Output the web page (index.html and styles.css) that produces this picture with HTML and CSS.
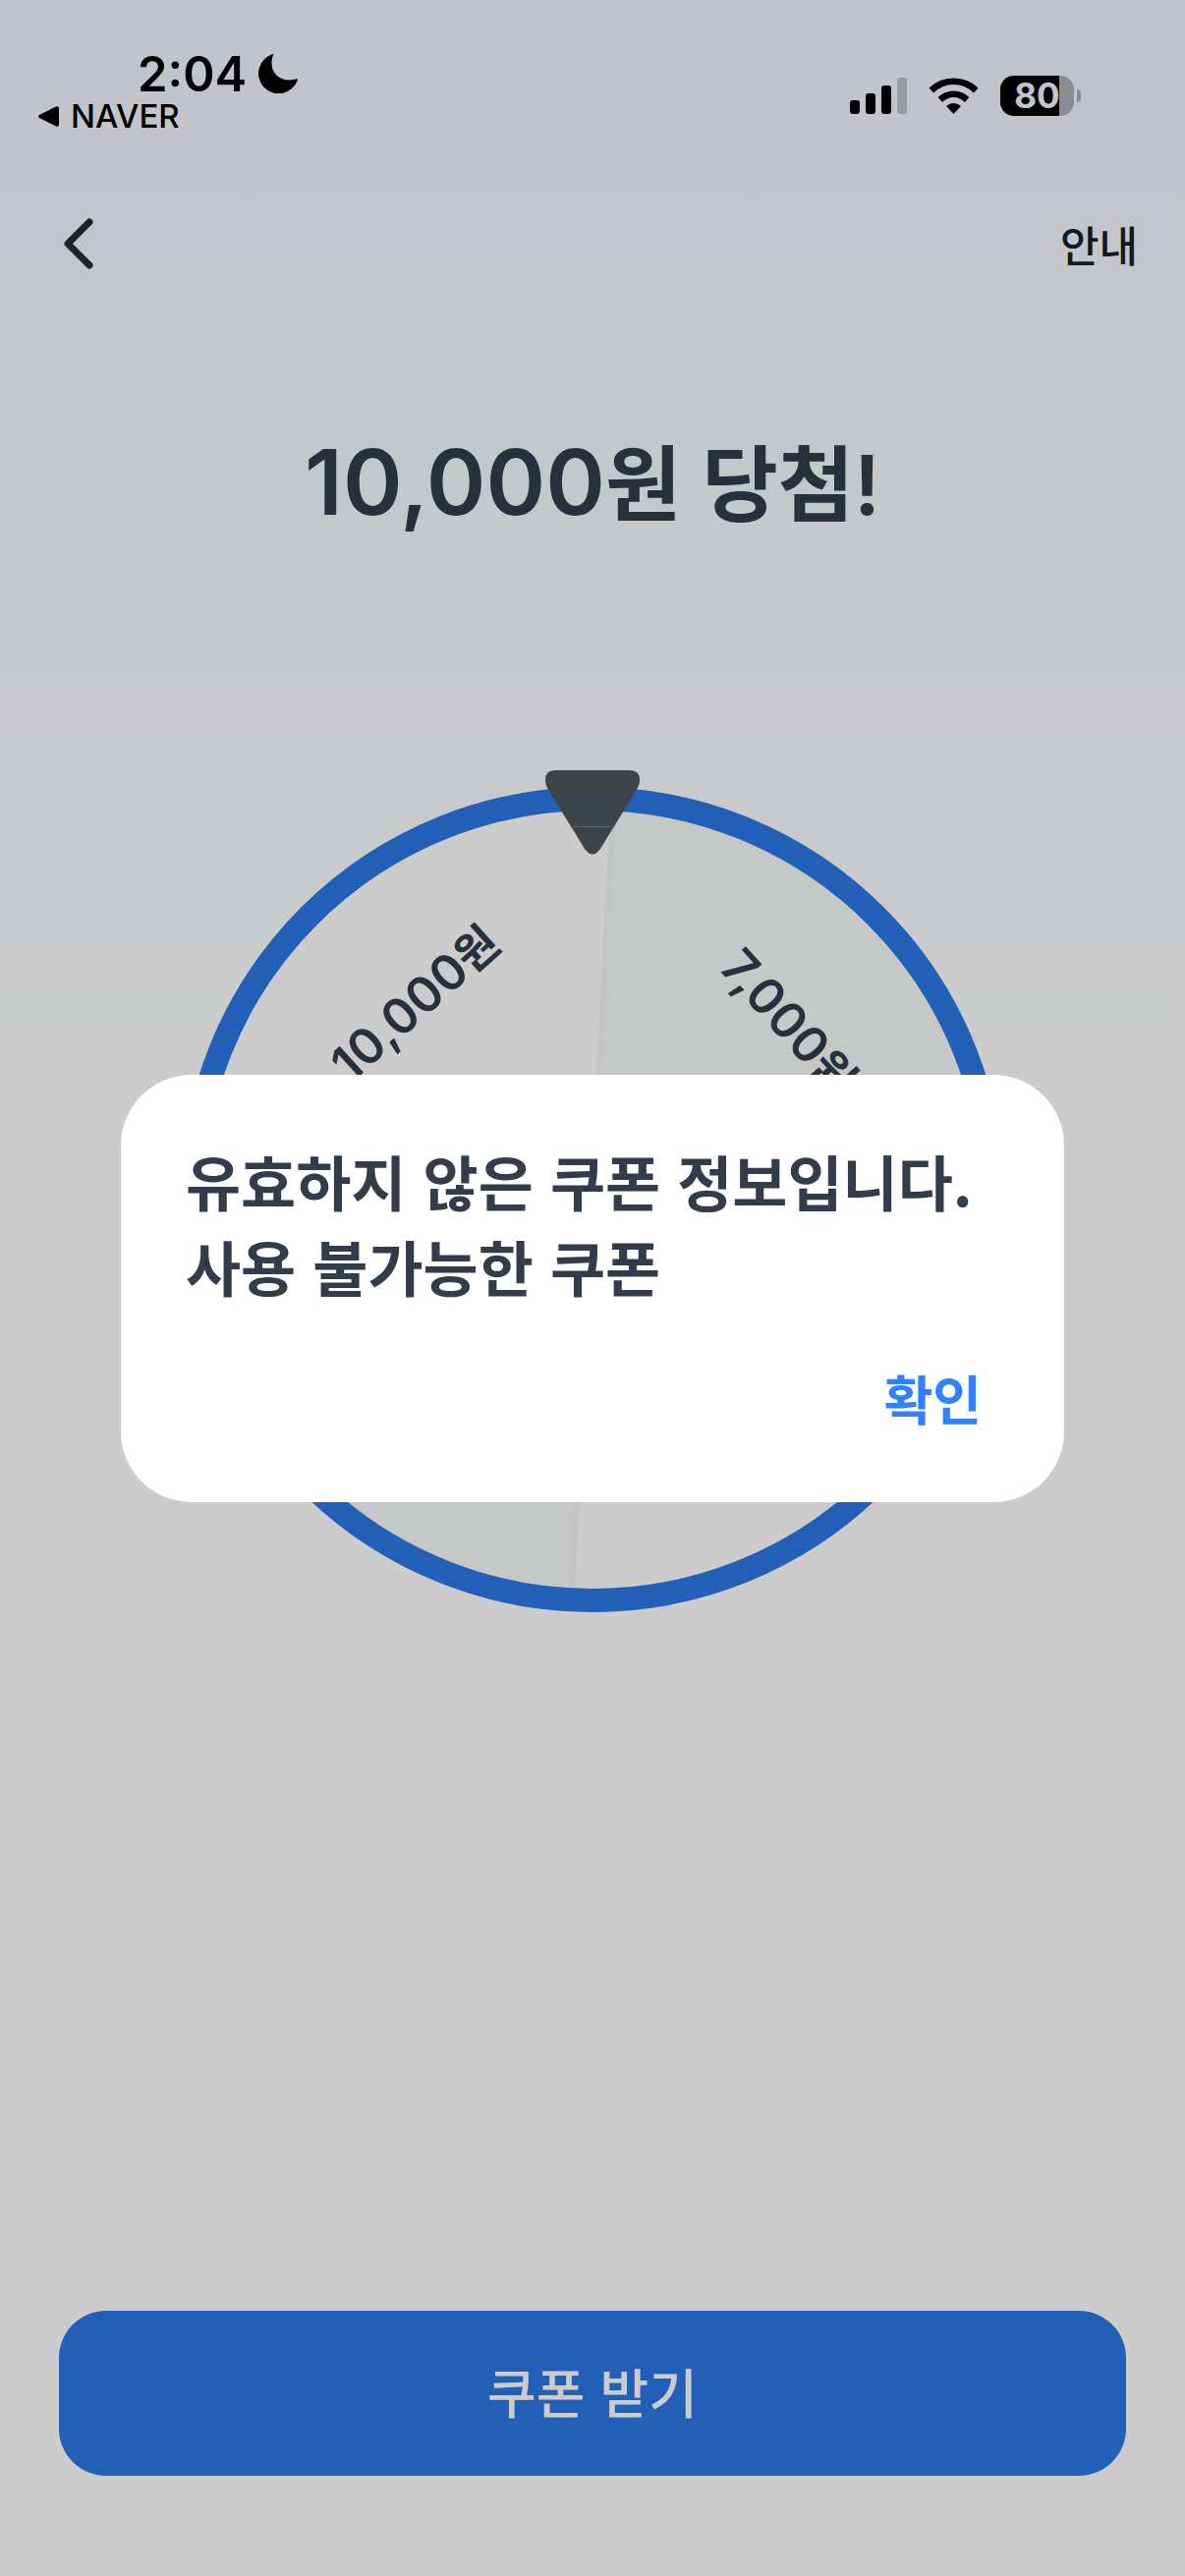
FILE: index.html
```html
<!DOCTYPE html>
<html lang="ko">
<head>
  <meta charset="UTF-8">
  <meta name="viewport" content="width=device-width, initial-scale=1">
  <title>쿠폰 룰렛</title>
  <link rel="stylesheet" href="styles.css">
</head>
<body>

  <div class="page">
    <div class="status-bar">
      <div class="status-left">
        <div class="clock">
          <span>2:04</span>
          <svg class="moon" viewBox="0 0 40 40">
            <path d="M15 1C16 0 15 -0.500 13.500 0.500A20.500 20.500 0 1 0 39.500 27.500C40.500 25.500 39.500 25 38 25.500C22 30 9 18 15 1Z"/>
          </svg>
        </div>
        <a class="back-app" href="#">
          <svg class="back-arrow" viewBox="0 0 21 21">
            <path d="M1 9Q-1 10.500 1 12L18 20.500Q21 21.500 21 18.500V2.500Q21 -0.500 18 0.500Z"/>
          </svg>
          <span>NAVER</span>
        </a>
      </div>
      <div class="status-right">
        <svg class="signal" viewBox="0 0 58 37">
          <rect x="0" y="23" width="10" height="14" rx="3"/>
          <rect x="16" y="16" width="10" height="21" rx="3"/>
          <rect x="32" y="8" width="10" height="29" rx="3"/>
          <rect x="48" y="0" width="10" height="37" rx="3" fill="#c1c4c9"/>
        </svg>
        <svg class="wifi" viewBox="0 0 51 37">
          <path d="M0.500 10.500A36 36 0 0 1 50.500 10.500L46 15.500A29 29 0 0 0 5 15.500Z"/>
          <path d="M9.500 20A23 23 0 0 1 41.500 20L37 25A16 16 0 0 0 14 25Z"/>
          <path d="M18 29A11 11 0 0 1 33 29L25.500 37Z"/>
        </svg>
        <div class="battery"><span>80</span></div>
      </div>
    </div>

    <header class="top-bar">
      <button class="back" type="button" aria-label="뒤로">
        <svg viewBox="0 0 30 52">
          <path d="M26 4L4 26L26 48"/>
        </svg>
      </button>
      <a class="guide" href="#">안내</a>
    </header>

    <main>
      <h1>10,000<span class="unit">원 당첨!</span></h1>

      <svg class="wheel" viewBox="-420 -437 840 857">
        <circle r="408" fill="#ffffff"/>
        <g transform="rotate(3)">
          <path d="M0 0V-408A408 408 0 0 1 408 0Z" fill="#f8faf9"/>
          <path d="M0 0V408A408 408 0 0 1 -408 0Z" fill="#f8faf9"/>
          <path d="M0 -408V408M-408 0H408" stroke="#f4f5f8" stroke-width="6"/>
        </g>
        <circle r="408" fill="none" stroke="#2b78e5" stroke-width="24"/>
        <g class="prize">
          <text transform="rotate(-42)" y="-252">10,000<tspan class="won">원</tspan></text>
          <text transform="rotate(48)" y="-252">7,000<tspan class="won">원</tspan></text>
        </g>
        <path class="pointer" d="M-38 -437H38Q48 -437 48 -427Q48 -423 46 -419L8 -357Q0 -346 -8 -357L-46 -419Q-48 -423 -48 -427Q-48 -437 -38 -437Z"/>
        <path d="M-36 -408.500H36" stroke="#415a85"/>
        <path d="M-20 -379.500H20" stroke="#7a7f86"/>
      </svg>
    </main>

    <footer>
      <button class="get-coupon" type="button">쿠폰 받기</button>
    </footer>
  </div>

  <div class="overlay">
    <div class="dialog" role="alertdialog" aria-labelledby="message">
      <p id="message">유효하지 않은 쿠폰 정보입니다.<br>사용 불가능한 쿠폰</p>
      <button class="confirm" type="button">확인</button>
    </div>
  </div>

</body>
</html>
```
FILE: styles.css
```css
* {
  box-sizing: border-box;
}

body {
  margin: 0;
  font-family: "Noto Sans CJK KR", sans-serif;
  color: #333c4a;
}

button {
  border: none;
  background: none;
  padding: 0;
  font-family: inherit;
  cursor: pointer;
}

a {
  color: inherit;
  text-decoration: none;
}

svg {
  display: block;
}

.page {
  display: flex;
  flex-direction: column;
  min-height: 100vh;
  background: linear-gradient(#f2f5fd, #f7fafd 480px, #ffffff 1150px);
}

/* status bar */
.status-bar {
  display: flex;
  justify-content: space-between;
  height: 177px;
  padding: 50px 113px 0 39px;
  font-family: Inter, sans-serif;
  color: #000;
}

.clock {
  display: flex;
  align-items: center;
  gap: 12px;
  height: 50px;
  padding-left: 101px;
  font-size: 49px;
  font-weight: 600;
}

.moon {
  width: 40px;
  height: 40px;
}

.back-app {
  display: flex;
  align-items: center;
  gap: 12px;
  height: 36px;
  font-size: 33px;
  font-weight: 500;
}

.back-arrow {
  width: 21px;
  height: 21px;
}

.status-right {
  display: flex;
  align-items: center;
  gap: 22px;
  height: 95px;
}

.signal {
  width: 58px;
  height: 37px;
}

.wifi {
  width: 51px;
  height: 37px;
}

.battery {
  position: relative;
  width: 75px;
  height: 41px;
  border-radius: 14px;
  background: linear-gradient(to right, #000 60px, #adb0b6 60px);
  font-size: 35px;
  font-weight: 700;
  line-height: 41px;
  text-align: center;
  color: #f2f5fc;
}

.battery::after {
  content: "";
  position: absolute;
  right: -7px;
  top: 14px;
  width: 4px;
  height: 13px;
  border-radius: 0 4px 4px 0;
  background: #adb0b6;
}

/* top bar */
.top-bar {
  display: flex;
  justify-content: space-between;
  align-items: center;
  height: 142px;
  padding: 0 48px 0 65px;
}

.back svg {
  width: 30px;
  height: 52px;
  fill: none;
  stroke: #292a2d;
  stroke-width: 7;
  stroke-linecap: round;
  stroke-linejoin: round;
}

.guide {
  font-size: 43px;
  font-weight: 500;
  color: #181e26;
}

/* roulette */
main {
  flex: 1;
  display: flex;
  flex-direction: column;
  align-items: center;
}

h1 {
  margin: 104px 0 225px;
  font-family: Inter, "Noto Sans CJK KR", sans-serif;
  font-size: 92px;
  font-weight: 600;
  line-height: 136px;
}

.unit {
  font-size: 84px;
  line-height: 1;
}

.wheel {
  width: 70%;
  max-width: 840px;
}

.prize {
  font-family: Inter, "Noto Sans CJK KR", sans-serif;
  font-size: 50px;
  font-weight: 600;
  text-anchor: middle;
  fill: #333c4a;
}

.won {
  font-size: 46px;
}

.pointer {
  fill: #4e545b;
}

/* bottom button */
footer {
  padding: 0 60px 102px;
}

.get-coupon {
  width: 100%;
  height: 168px;
  padding-bottom: 6px;
  border-radius: 48px;
  background: #2b78e5;
  font-size: 54px;
  font-weight: 500;
  color: #fff;
}

/* alert */
.overlay {
  position: fixed;
  inset: 0;
  display: flex;
  justify-content: center;
  align-items: center;
  background: rgba(0, 0, 0, 0.2);
}

.dialog {
  display: flex;
  flex-direction: column;
  gap: 50px;
  width: 80%;
  max-width: 960px;
  padding: 64px 66px 66px;
  border-radius: 72px;
  background: #fff;
}

.dialog p {
  margin: 0;
  font-size: 61px;
  font-weight: 700;
  line-height: 87px;
}

.confirm {
  align-self: flex-end;
  padding: 0 18px;
  font-size: 54px;
  font-weight: 700;
  line-height: 81px;
  color: #3182f6;
}
```
